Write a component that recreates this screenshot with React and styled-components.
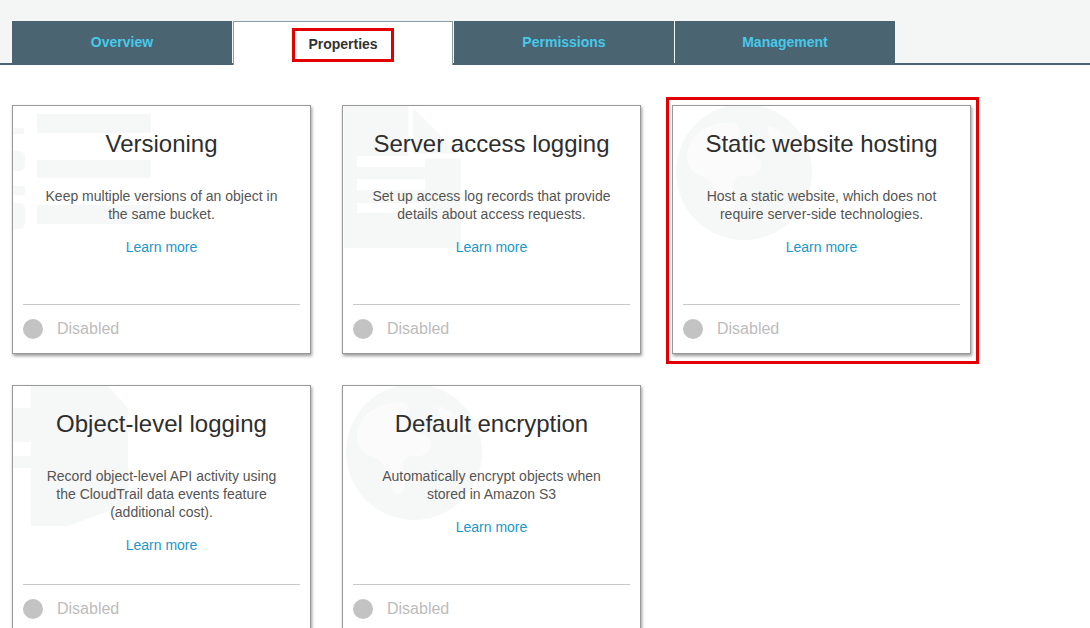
import React from 'react';
import styled, { createGlobalStyle } from 'styled-components';

const GlobalStyle = createGlobalStyle`
  html, body {
    margin: 0;
    padding: 0;
    overflow: hidden;
    background: #fff;
    font-family: "Liberation Sans", Arial, Helvetica, sans-serif;
  }
`;

const TabStrip = styled.div`
  display: flex;
  align-items: flex-start;
  padding: 21px 0 0 12px;
  background: #f4f5f5;
  border-bottom: 2px solid #4b6471;
`;

const Tab = styled.div`
  position: relative;
  box-sizing: border-box;
  width: 220px;
  height: ${(p) => (p.active ? '44px' : '42px')};
  margin-right: 1px;
  margin-bottom: ${(p) => (p.active ? '-2px' : '0')};
  display: flex;
  justify-content: center;
  align-items: ${(p) => (p.active ? 'flex-start' : 'center')};
  padding-top: ${(p) => (p.active ? '6px' : '0')};
  background: ${(p) => (p.active ? '#fff' : '#4b6471')};
  border: ${(p) => (p.active ? '1px solid #8c9ca5' : 'none')};
  border-bottom: none;
  color: ${(p) => (p.active ? '#333' : '#46c9ea')};
  font-size: 14px;
  font-weight: bold;
`;

const Highlight = styled.span`
  display: inline-block;
  border: 3px solid #e30000;
  padding: 5px 13px 6px;
  line-height: 17px;
`;

const Grid = styled.div`
  display: grid;
  grid-template-columns: repeat(3, 299px);
  gap: 31px;
  padding: 40px 12px;
`;

const Card = styled.div`
  position: relative;
  box-sizing: border-box;
  height: 249px;
  display: flex;
  flex-direction: column;
  padding: 24px 10px 1px;
  background: #fff;
  border: 1px solid #999;
  box-shadow: 1px 2px 3px rgba(0, 0, 0, 0.4);
  text-align: center;

  ${(p) =>
    p.highlighted &&
    `
    &::after {
      content: '';
      position: absolute;
      top: -9px;
      left: -7px;
      right: -9px;
      bottom: -11px;
      border: 3px solid #e30000;
      pointer-events: none;
    }
  `}
`;

const Watermark = styled.svg`
  position: absolute;
  top: 0;
  left: 0;
  width: 160px;
  height: 160px;
  pointer-events: none;
`;

const Title = styled.h3`
  position: relative;
  margin: 0;
  font-size: 24px;
  line-height: 28px;
  font-weight: normal;
  color: #2e2e2e;
`;

const Description = styled.p`
  position: relative;
  margin: 29px 0 0;
  font-size: 14px;
  line-height: 18px;
  color: #555;
`;

const LearnMore = styled.a`
  position: relative;
  display: block;
  margin-top: 15px;
  font-size: 14px;
  line-height: 18px;
  color: #1b97cb;
  text-decoration: none;
  cursor: pointer;
`;

const Footer = styled.div`
  position: relative;
  box-sizing: border-box;
  height: 48px;
  margin-top: auto;
  display: flex;
  align-items: center;
  gap: 14px;
  border-top: 1px solid #c9c9c9;
`;

const StatusDot = styled.span`
  width: 20px;
  height: 20px;
  border-radius: 50%;
  background: #c3c3c3;
`;

const StatusText = styled.span`
  font-size: 16px;
  color: #bcbcbc;
`;

const faint = '#f6f7f7';
const fainter = '#fbfbfb';

function ListMark() {
  return (
    <Watermark viewBox="0 0 160 160">
      <rect x="24" y="8" width="114" height="19" fill={faint} />
      <rect x="24" y="54" width="114" height="18" fill={faint} />
      <rect x="24" y="99" width="114" height="19" fill={faint} />
      <rect x="0" y="22" width="11" height="6" fill={faint} />
      <path d="M0 45 h6 a6 6 0 0 1 6 6 v8 a6 6 0 0 1 -6 6 h-6 z" fill={faint} />
      <rect x="0" y="80" width="12" height="9" fill={faint} />
      <path d="M0 97 h6 a6 6 0 0 1 6 6 v14 a6 6 0 0 1 -6 6 h-6 z" fill={faint} />
    </Watermark>
  );
}

function DocMark() {
  return (
    <Watermark viewBox="0 0 160 160">
      <path d="M1 0 H68 L118 50 V142 H1 Z" fill={faint} />
      <path d="M68 0 V50 H118" fill="none" stroke="#fff" strokeWidth="5" />
      <rect x="14" y="50" width="68" height="11" fill="#fff" />
      <rect x="14" y="73" width="68" height="11" fill="#fff" />
      <rect x="14" y="97" width="68" height="10" fill="#fff" />
    </Watermark>
  );
}

function GlobeMark() {
  return (
    <Watermark viewBox="0 0 160 160">
      <circle cx="71" cy="66" r="68" fill={faint} />
      <path
        d="M22 30 C34 18 52 14 64 18 C70 26 62 34 66 42 C72 50 84 46 88 56 C90 66 78 72 70 70 C60 68 58 80 62 92 C64 104 56 112 50 106 C44 96 46 84 38 76 C30 68 20 70 16 60 C12 50 14 40 22 30 Z"
        fill={fainter}
      />
      <path
        d="M96 20 C108 24 120 34 126 46 C120 50 110 44 104 38 C98 32 92 26 96 20 Z"
        fill={fainter}
      />
    </Watermark>
  );
}

function BoxMark() {
  return (
    <Watermark viewBox="0 0 160 160">
      <path d="M18 0 H95 L115 22 V118 L55 140 H18 Z" fill={faint} />
      <rect x="0" y="22" width="18" height="34" fill={faint} />
      <rect x="0" y="70" width="18" height="12" fill={faint} />
    </Watermark>
  );
}

const marks = {
  list: ListMark,
  doc: DocMark,
  globe: GlobeMark,
  box: BoxMark,
};

const tabs = [
  { label: 'Overview' },
  { label: 'Properties', active: true },
  { label: 'Permissions' },
  { label: 'Management' },
];

const features = [
  {
    title: 'Versioning',
    lines: ['Keep multiple versions of an object in', 'the same bucket.'],
    mark: 'list',
  },
  {
    title: 'Server access logging',
    lines: ['Set up access log records that provide', 'details about access requests.'],
    mark: 'doc',
  },
  {
    title: 'Static website hosting',
    lines: ['Host a static website, which does not', 'require server-side technologies.'],
    mark: 'globe',
    highlighted: true,
  },
  {
    title: 'Object-level logging',
    lines: [
      'Record object-level API activity using',
      'the CloudTrail data events feature',
      '(additional cost).',
    ],
    mark: 'box',
  },
  {
    title: 'Default encryption',
    lines: ['Automatically encrypt objects when', 'stored in Amazon S3'],
    mark: 'globe',
  },
];

function FeatureCard({ feature }) {
  const Mark = marks[feature.mark];
  return (
    <Card highlighted={feature.highlighted}>
      <Mark />
      <Title>{feature.title}</Title>
      <Description>
        {feature.lines.map((line, i) => (
          <React.Fragment key={line}>
            {i > 0 && <br />}
            {line}
          </React.Fragment>
        ))}
      </Description>
      <LearnMore>Learn more</LearnMore>
      <Footer>
        <StatusDot />
        <StatusText>Disabled</StatusText>
      </Footer>
    </Card>
  );
}

export default function App() {
  return (
    <>
      <GlobalStyle />
      <TabStrip>
        {tabs.map((tab) => (
          <Tab key={tab.label} active={tab.active}>
            {tab.active ? <Highlight>{tab.label}</Highlight> : tab.label}
          </Tab>
        ))}
      </TabStrip>
      <Grid>
        {features.map((feature) => (
          <FeatureCard key={feature.title} feature={feature} />
        ))}
      </Grid>
    </>
  );
}
